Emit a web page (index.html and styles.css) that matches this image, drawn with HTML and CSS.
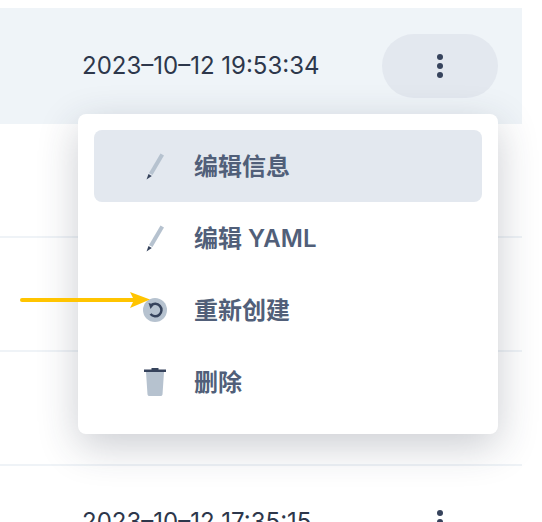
FILE: index.html
```html
<!DOCTYPE html>
<html lang="zh">
<head>
<meta charset="utf-8">
<title>Menu</title>
<link rel="stylesheet" href="styles.css">
</head>
<body>
<div class="table">
  <div class="row row-active">
    <span class="time">2023–10–12 19:53:34</span>
    <button class="more more-open"><svg class="dots" width="8" height="26" viewBox="0 0 8 26"><circle cx="4" cy="4" r="3"/><circle cx="4" cy="13" r="3"/><circle cx="4" cy="22" r="3"/></svg></button>
  </div>
  <div class="row"></div>
  <div class="row"></div>
  <div class="row"></div>
  <div class="row">
    <span class="time">2023–10–12 17:35:15</span>
    <button class="more"><svg class="dots" width="8" height="26" viewBox="0 0 8 26"><circle cx="4" cy="4" r="3"/><circle cx="4" cy="13" r="3"/><circle cx="4" cy="22" r="3"/></svg></button>
  </div>
</div>
<div class="menu">
  <div class="item item-hover">
    <svg class="icon" width="24" height="32" viewBox="0 0 24 32"><path class="light" d="M17.500 3.500 21 5.500 9.500 25 6 23z"/><path class="dark" d="M5.500 24 8.800 25.900 3.500 29.500z"/></svg>
    <span class="label">编辑信息</span>
  </div>
  <div class="item">
    <svg class="icon" width="24" height="32" viewBox="0 0 24 32"><path class="light" d="M17.500 3.500 21 5.500 9.500 25 6 23z"/><path class="dark" d="M5.500 24 8.800 25.900 3.500 29.500z"/></svg>
    <span class="label">编辑 YAML</span>
  </div>
  <div class="item">
    <svg class="icon" width="24" height="32" viewBox="0 0 24 32"><circle class="light" cx="12" cy="16" r="12"/><path class="stroke" d="M8 11.500A6.200 6.200 0 1 1 7.500 20"/><path class="dark" d="M5.500 9 11 10.500 7.500 15z"/></svg>
    <span class="label">重新创建</span>
  </div>
  <div class="item">
    <svg class="icon" width="24" height="32" viewBox="0 0 24 32"><path class="light" d="M3 6h18l-1.500 22.500a2 2 0 0 1-2 1.500H6.500a2 2 0 0 1-2-1.500z"/><path class="dark" d="M1 3.500h22V6H1zM8.500 2h7v1.500h-7z"/></svg>
    <span class="label">删除</span>
  </div>
</div>
<svg class="arrow" width="130" height="20" viewBox="0 0 130 20"><path d="M2 10h112" stroke="#ffc400" stroke-width="4" stroke-linecap="round"/><path d="M110 2 130 9.500 110 18 114 10z" fill="#ffc400"/></svg>
</body>
</html>
```
FILE: styles.css
```css
* { box-sizing: border-box; }
html, body { margin: 0; height: 100%; overflow: hidden; background: #fff; }
body { position: relative; padding-top: 8px; font-family: Inter, "Noto Sans CJK SC", sans-serif; }
.table { width: 522px; }
.row {
  height: 114px;
  display: flex;
  align-items: center;
  justify-content: space-between;
  padding: 0 24px 0 82px;
  border-bottom: 2px solid #eff3f7;
}
.row-active { height: 116px; background: #eff4f8; border-bottom: 0; }
.time { font-size: 24px; color: #2d374b; padding-bottom: 2px; }
.more {
  width: 116px;
  height: 64px;
  border: 0;
  border-radius: 32px;
  background: transparent;
  display: flex;
  align-items: center;
  justify-content: center;
  padding: 0;
}
.more-open { background: #e3e8ef; }
.dots { fill: #36435c; }
.menu {
  position: absolute;
  left: 78px;
  top: 114px;
  width: 420px;
  height: 320px;
  padding: 16px;
  background: #fff;
  border-radius: 8px;
  box-shadow: 0 12px 40px rgba(36, 46, 66, 0.24);
}
.item {
  height: 72px;
  display: flex;
  align-items: center;
  gap: 28px;
  padding-left: 49px;
  border-radius: 8px;
  font-family: Inter, "Noto Sans CJK SC", sans-serif;
  font-size: 24px;
  font-weight: 600;
  color: #515f79;
}
.label { padding-bottom: 3px; margin-left: -1px; }
.item-hover { background: #e3e8ef; }
.icon { flex: none; }
.light { fill: #b6c2cf; }
.dark { fill: #36435c; }
.stroke { fill: none; stroke: #36435c; stroke-width: 2.500; }
.arrow { position: absolute; left: 20px; top: 290px; }
```
